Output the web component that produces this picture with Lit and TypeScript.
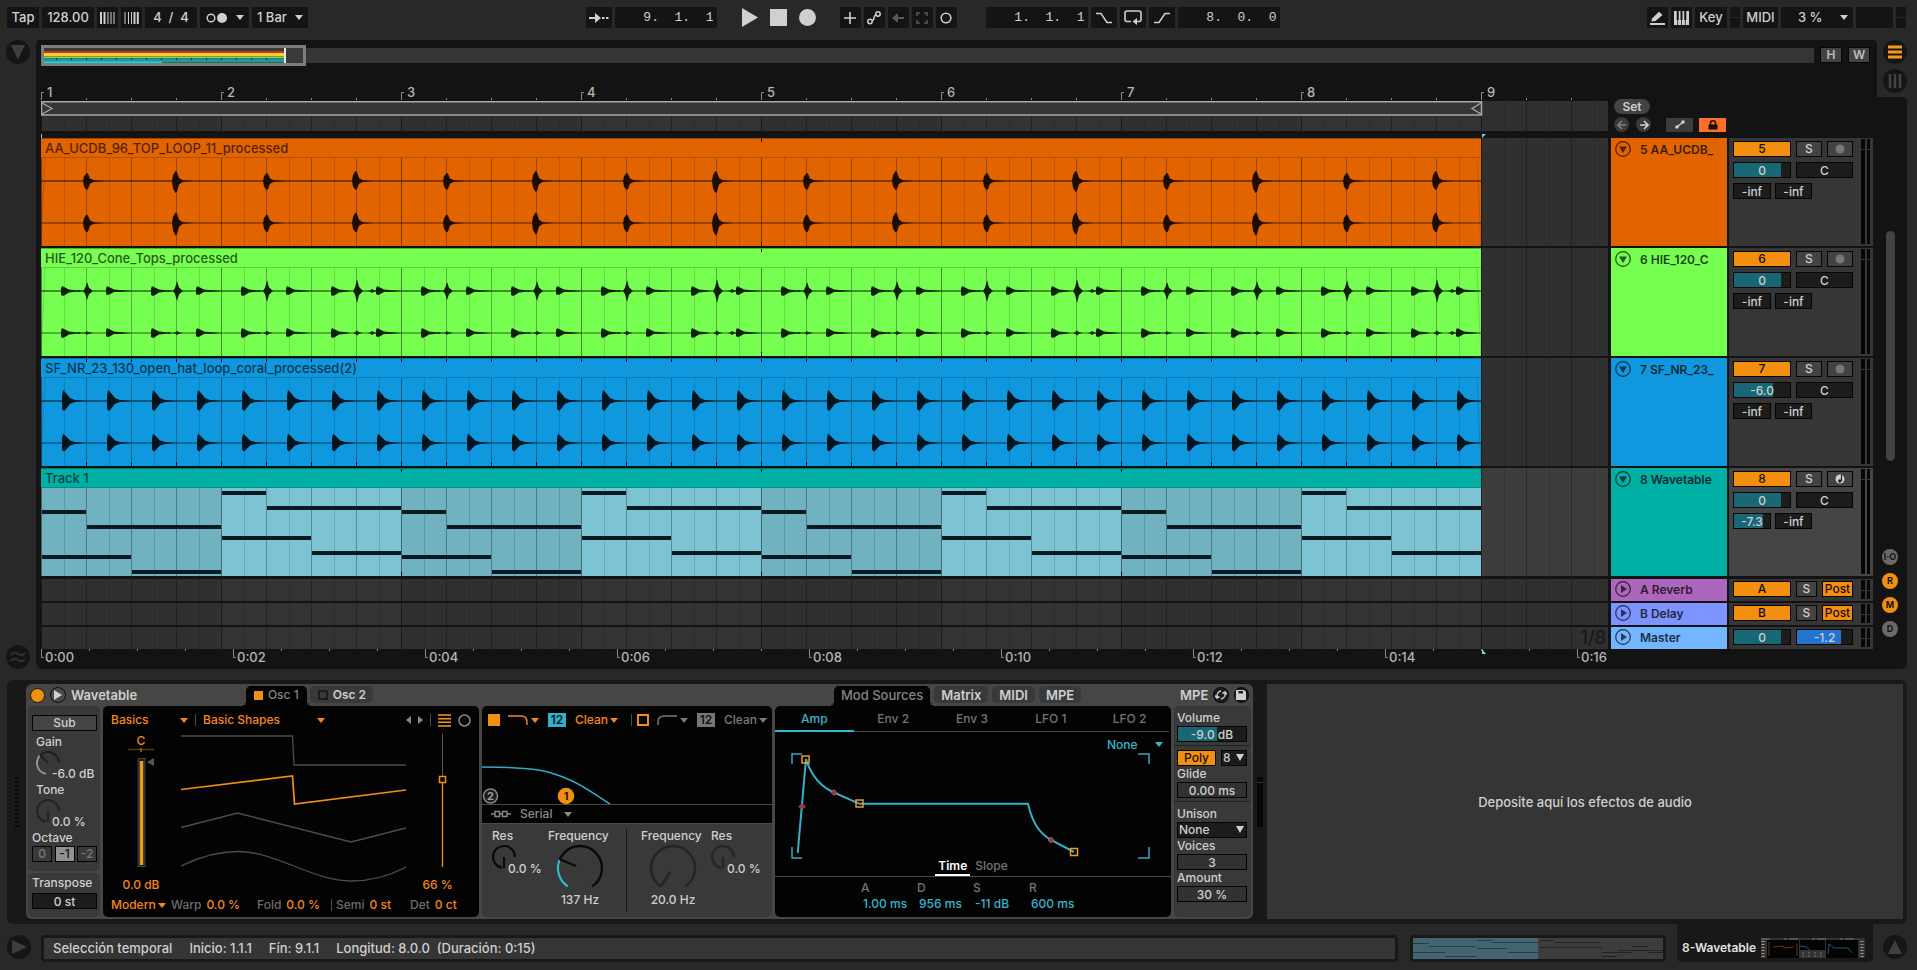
import { LitElement, html, svg, css } from "lit";
import { customElement } from "lit/decorators.js";
import { classMap } from "lit/directives/class-map.js";

const base = css`
  *, *::before, *::after { box-sizing: border-box; }
  :host {
    display: block;
    box-sizing: border-box;
    font-family: Inter, "Noto Sans", sans-serif;
    font-size: 12px;
    line-height: 16px;
    font-weight: 500;
    color: #cfcfcf;
  }
  svg { display: block; flex: none; }
  button, input, select {
    font: inherit;
    color: inherit;
    background: none;
    border: 0;
    border-radius: 0;
    padding: 0;
    margin: 0;
    outline: none;
    appearance: none;
  }
  button { display: flex; align-items: center; justify-content: center; }
  input { min-width: 0; }
  .text { width: 48px; field-sizing: content; }
  .ghost { position: absolute; inset: 0; width: 100%; height: 100%; opacity: 0; }
  .box {
    display: block;
    width: 100%;
    height: 16px;
    border: 1px solid #050505;
    background: #1c1c1c;
    text-align: center;
    line-height: 14px;
  }
  .round { width: 24px; height: 24px; border-radius: 50%; background: #151515; }
`;

const caret = (color = "currentColor") => html`<svg width="8" height="5" viewBox="0 0 8 5"><path d="M0 0H8L4 5Z" fill=${color} /></svg>`;

const bigCaret = () => html`<svg width="10" height="8" viewBox="0 0 10 8"><path d="M1 0H9L5 7Z" fill="currentColor" /></svg>`;

/** Numeric field with a coloured level behind its value. */
const level = (label: string, value: string, pct: number, fill = "#186775") => html`
  <input class="box" aria-label=${label} .value=${value}
    style="background:linear-gradient(90deg, ${fill} ${pct}%, #1c1c1c ${pct}%)" />`;

@customElement("live-transport")
class LiveTransport extends LitElement {
  static styles = [base, css`
    :host { height: 40px; padding: 7px 11px 0 7px; }
    .bar, .group { display: flex; gap: 3px; }
    .bar { gap: 0; font-size: 13px; line-height: 21px; }
    .left { flex: 3; margin-right: 2px; }
    .right { flex: 4; }
    button, .pair, .cell { height: 21px; background: #141414; }
    .cell { text-align: center; }
    .pair { display: flex; align-items: center; justify-content: space-between; }
    .w21 { width: 21px; }
    .w26 { width: 26px; }
    .w32 { width: 32px; }
    .w35 { width: 35px; }
    .w37 { width: 37px; }
    .w52 { width: 52px; }
    .metro { width: 49px; padding: 0 5px 0 6px; }
    .quant { width: 56px; padding: 0 5px 0 5px; }
    .cpu { width: 72px; padding: 0 5px 0 17px; }
    select { flex: 1; min-width: 0; }
    .pos {
      width: 102px;
      padding-right: 3px;
      text-align: right;
      font-family: "Liberation Mono", "DejaVu Sans Mono", monospace;
      font-size: 13px;
      font-weight: 400;
      white-space: pre;
    }
    .play { gap: 12px; margin: 0 24px 0 24px; }
    .play button { background: none; width: 17px; color: #d0d0d0; }
    .edit { margin-right: 29px; }
    .dim { color: #585858; }
    .leds { width: 10px; display: grid; grid-template-rows: 10px 10px; gap: 1px; }
    .leds i { background: #141414; }
  `];

  render() {
    return html`
      <div class="bar">
        <div class="group">
          <button class="w32">Tap</button>
          <input class="cell w52" aria-label="Tempo" .value=${"128.00"} />
          <button class="w21" aria-label="Nudge down"><svg width="15" height="12" stroke="currentColor"><path d="M1 0V12M4.5 0V12" stroke-width="2" /><path d="M8 0V12M11 0V12M14 0V12" /></svg></button>
          <button class="w21" aria-label="Nudge up"><svg width="15" height="12" stroke="currentColor"><path d="M1 0V12M4.500 0V12M7.500 0V12" /><path d="M10.500 0V12M13.800 0V12" stroke-width="2" /></svg></button>
          <input class="cell w52" aria-label="Time signature" .value=${"4  /  4"} />
          <div class="pair metro">
            <button aria-label="Metronome"><svg width="22" height="12"><circle cx="5" cy="6" r="3.800" fill="none" stroke="currentColor" stroke-width="1.400" /><circle cx="16" cy="6" r="5" fill="#d0d0d0" /></svg></button>
            ${caret()}
          </div>
          <label class="pair quant"><select aria-label="Quantization"><option>1 Bar</option></select>${caret()}</label>
        </div>
        <div class="left"></div>
        <div class="group">
          <button class="w26" aria-label="Follow"><svg width="20" height="12"><path d="M0 6H7" stroke="currentColor" stroke-width="2" /><path d="M6 1L12 6L6 11Z" fill="currentColor" /><path d="M13 6H15.500M17 6H19.500" stroke="currentColor" stroke-width="2" /></svg></button>
          <input class="cell pos" aria-label="Position" .value=${"9.  1.  1"} />
        </div>
        <div class="group play">
          <button aria-label="Play"><svg width="17" height="19"><path d="M1 0L17 9.500L1 19Z" fill="currentColor" /></svg></button>
          <button aria-label="Stop"><svg width="17" height="17"><path d="M0 0H17V17H0Z" fill="currentColor" /></svg></button>
          <button aria-label="Record"><svg width="17" height="17"><circle cx="8.500" cy="8.500" r="8.500" fill="currentColor" /></svg></button>
        </div>
        <div class="group edit">
          <button class="w21" aria-label="Overdub"><svg width="12" height="12"><path d="M6 0V12M0 6H12" stroke="currentColor" stroke-width="1.600" /></svg></button>
          <button class="w21" aria-label="Automation arm"><svg width="14" height="14" fill="none" stroke="currentColor" stroke-width="1.500"><circle cx="3" cy="10.500" r="2.200" /><circle cx="11" cy="3" r="2.200" /><path d="M5 9.500C8 10 6 4 9 4" /></svg></button>
          <button class="w21 dim" aria-label="Re-enable automation"><svg width="12" height="10"><path d="M3 5H12" stroke="currentColor" stroke-width="2" /><path d="M6 0L0 5L6 10Z" fill="currentColor" /></svg></button>
          <button class="w21 dim" aria-label="Capture"><svg width="12" height="12" fill="none" stroke="currentColor" stroke-width="1.500"><path d="M1 4V1H4M8 1H11V4M11 8V11H8M4 11H1V8" /></svg></button>
          <button class="w21" aria-label="Session record"><svg width="12" height="12"><circle cx="6" cy="6" r="4.800" fill="none" stroke="currentColor" stroke-width="1.600" /></svg></button>
        </div>
        <div class="group">
          <input class="cell pos" aria-label="Loop start" .value=${"1.  1.  1"} />
          <button class="w26" aria-label="Punch in"><svg width="18" height="12" fill="none" stroke="currentColor" stroke-width="1.500"><path d="M1 1.500H6L12 10.500H17" /></svg></button>
          <button class="w26" aria-label="Loop"><svg width="18" height="15" fill="none" stroke="currentColor" stroke-width="1.600"><path d="M7 11.500H3A2 2 0 0 1 1 9.500V3A2 2 0 0 1 3 1H15A2 2 0 0 1 17 3V9.500A2 2 0 0 1 15 11.500H12" /><path d="M13 8V15L8.500 11.500Z" fill="currentColor" stroke="none" /></svg></button>
          <button class="w26" aria-label="Punch out"><svg width="18" height="12" fill="none" stroke="currentColor" stroke-width="1.500"><path d="M1 10.500H6L12 1.500H17" /></svg></button>
          <input class="cell pos" aria-label="Loop length" .value=${"8.  0.  0"} />
        </div>
        <div class="right"></div>
        <div class="group">
          <button class="w21" aria-label="Draw mode"><svg width="15" height="14"><path d="M0 13H15" stroke="currentColor" stroke-width="2" /><path d="M1.500 10.500L2 7.500L9 0.800L12.500 4L5.500 10Z" fill="currentColor" /></svg></button>
          <button class="w21" aria-label="Computer MIDI keyboard"><svg width="15" height="14"><path d="M0 0H15V14H0Z" fill="currentColor" /><path d="M3.700 0V9M7.500 0V9M11.300 0V9" stroke="#141414" stroke-width="2" /><path d="M3.700 0V14M7.500 0V14M11.300 0V14" stroke="#141414" stroke-width="0.800" /></svg></button>
          <button class="w32">Key</button>
          <div class="leds"><i></i><i></i></div>
          <button class="w35">MIDI</button>
          <label class="pair cpu"><select aria-label="CPU load"><option>3 %</option></select>${caret()}</label>
          <div class="cell w37"></div>
          <div class="leds"><i></i><i></i></div>
        </div>
      </div>`;
  }
}

const BAR = 180;
const BARS = 8;
const END = BAR * BARS;

/** Eighth, quarter and bar lines, over shaded odd bars. */
const gridSvg = (h: number, bars = 10, shade = 0.05) => svg`
  ${Array.from({ length: Math.ceil(bars / 2) }, (_, i) => svg`<rect x=${i * 2 * BAR} width=${BAR} height=${h} fill="#000" opacity=${shade} />`)}
  ${Array.from({ length: bars * 8 }, (_, i) => svg`<path d="M${Math.round(i * 22.5) + 0.5} 0V${h}" stroke="#000" stroke-opacity=${i % 8 === 0 ? 0.45 : i % 2 === 0 ? 0.3 : 0.14} />`)}`;

type Hit = [number, number, number];

const burst = (c: number, k: number) => ([x, up, down]: Hit) =>
  `M${x - 4} ${c}L${x - 3} ${c - up * k * 0.6}L${x - 0.5} ${c - up * k}L${x + 1} ${c - up * k * 0.9}L${x + 3} ${c - up * k * 0.3}L${x + 7} ${c - 0.8}L${x + 18} ${c}L${x + 7} ${c + 0.8}L${x + 3} ${c + down * k * 0.3}L${x + 1} ${c + down * k * 0.9}L${x - 0.5} ${c + down * k}L${x - 3} ${c + down * k * 0.6}Z`;

const decay = (c: number, k: number, len = 22) => ([x, up, down]: Hit) =>
  `M${x - 2} ${c - up * k * 0.5}L${x - 1} ${c - up * k}L${x + 2} ${c - up * k * 0.72}L${x + 6} ${c - up * k * 0.28}L${x + 11} ${c - 1}L${x + len} ${c}L${x + 11} ${c + 1}L${x + 6} ${c + down * k * 0.28}L${x + 2} ${c + down * k * 0.8}L${x} ${c + down * k}L${x - 2} ${c + down * k * 0.8}Z`;

const spike = (c: number, k: number) => ([x, up, down]: Hit) =>
  `M${x - 4} ${c}L${x - 2} ${c - up * k * 0.3}L${x} ${c - up * k}L${x + 2} ${c - up * k * 0.35}L${x + 6} ${c}L${x + 2} ${c + down * k * 0.35}L${x} ${c + down * k}L${x - 2} ${c + down * k * 0.3}Z`;

const TOP = 23;
const LOW = 65;

const topLoop = () => {
  const sizes = [[8, 9], [10, 12], [8, 9], [10, 9], [8, 9], [10, 11]];
  const hits = Array.from({ length: 16 }, (_, i): Hit => [46 + i * 90 - (i % 2), sizes[i % 6][0], sizes[i % 6][1]]);
  return [...hits.map(burst(TOP, 1)), ...hits.map(burst(LOW, 1.050))].join("");
};

const coneTops = () => {
  let d = "";
  for (let i = 0; i < 16; i++) {
    const x = 22 + i * 90;
    const up = 9 + (i % 4);
    for (const c of [TOP, LOW]) {
      d += decay(c, 1, 18)([x, 5, 5]);
      d += decay(c, 1, 24)([x + 45, 5, 4]);
      d += spike(c, c === TOP ? 1 : 0.2)([x + 24, up, up]);
      d += spike(c, 1)(i % 4 === 3 ? [x + 39, 2, 2] : [x + 16, 1, 1]);
    }
  }
  return d;
};

const openHat = () => {
  const hits = Array.from({ length: 32 }, (_, i): Hit => [23 + i * 45, 11, 10]);
  return [...hits.map(decay(TOP, 1)), ...hits.map(decay(LOW, 0.850))].join("");
};

const notes = [[0, 45, 22], [45, 135, 37], [0, 90, 67], [90, 90, 82], [180, 45, 3], [225, 135, 18], [180, 90, 48], [270, 90, 63]];

interface Track {
  n: string; name: string; clip: string; color: string; ink: string; marks: number;
  vol: string; pct: number; peak: string; peakPct: number; wave?: () => string; midi?: boolean;
}

const tracks: Track[] = [
  { n: "5", name: "5 AA_UCDB_", clip: "AA_UCDB_96_TOP_LOOP_11_processed", color: "#e26400", ink: "#1d0d00", marks: 720, vol: "0", pct: 84, peak: "-inf", peakPct: 0, wave: topLoop },
  { n: "6", name: "6 HIE_120_C", clip: "HIE_120_Cone_Tops_processed", color: "#76ff50", ink: "#0f210a", marks: 720, vol: "0", pct: 84, peak: "-inf", peakPct: 0, wave: coneTops },
  { n: "7", name: "7 SF_NR_23_", clip: "SF_NR_23_130_open_hat_loop_coral_processed(2)", color: "#1098de", ink: "#02141d", marks: 45, vol: "-6.0", pct: 70, peak: "-inf", peakPct: 0, wave: openHat },
  { n: "8", name: "8 Wavetable", clip: "Track 1", color: "#00b0a4", ink: "#0a1a20", marks: 360, vol: "0", pct: 84, peak: "-7.3", peakPct: 80, midi: true },
];

@customElement("live-arrangement")
class LiveArrangement extends LitElement {
  static styles = [base, css`
    .area { display: grid; grid-template-columns: 36px minmax(0, 1fr) 40px; }
    .gutter { display: flex; flex-direction: column; justify-content: space-between; align-items: center; }
    .panel { background: #131313; padding: 4px 4px 0 5px; border-radius: 4px 4px 0 6px; }
    .overview { display: flex; align-items: center; height: 22px; padding-right: 3px; }
    .strip { flex: 1; min-width: 0; height: 15px; background: #353535; }
    .strip svg { position: relative; top: -3px; }
    .hw { width: 22px; height: 16px; background: #434343; border: 1px solid #050505; margin-left: 6px; font-weight: 600; color: #bdbdbd; }
    .main { display: grid; grid-template-columns: minmax(0, 1fr) 116px 144px; column-gap: 2px; padding-top: 4px; }
    .lane { position: relative; overflow: hidden; background: #333; min-width: 0; margin-right: 1px; }
    .ruler { height: 31px; background: none; }
    .loop { height: 30px; }
    .gap { grid-column: 1 / -1; height: 7px; }
    .tools { grid-column: 2 / -1; grid-row: 1 / 3; height: 61px; display: flex; flex-direction: column; gap: 3px; padding: 29px 0 0 3px; }
    .set { flex: none; width: 36px; height: 15px; border-radius: 8px; background: #434343; font-weight: 600; }
    .toolrow { display: flex; align-items: center; }
    .mini { width: 15px; height: 15px; border-radius: 50%; background: #3a3a3a; margin-right: 7px; color: #d0d0d0; }
    .off { color: #808080; }
    .tool { width: 27px; height: 14px; background: #3c3c3c; margin-left: 8px; color: #cfcfcf; }
    .tool + .tool { margin-left: 6px; }
    .lock { background: #ff6f2c; color: #1a0a00; }
    .track { height: 108px; margin-bottom: 2px; }
    .name, .mix { background: #363636; }
    .sel { background: #414141; }
    .mix.sel { background: #454545; }
    .last { margin-bottom: 3px; }
    .clip { width: 1440px; position: relative; overflow: hidden; }
    .title { height: 20px; padding: 2px 4px 0; line-height: 17px; border-bottom: 1px solid #00000030; white-space: nowrap; font-size: 13px; }
    .title span { opacity: 0.750; }
    .marks { position: absolute; inset: 0; }
    .name { display: flex; align-items: flex-start; padding: 3px 0 0 4px; gap: 9px; color: #0b0b0b; overflow: hidden; white-space: nowrap; line-height: 17px; }
    .name span { opacity: 0.800; font-weight: 600; }
    .mix { display: flex; justify-content: space-between; padding: 1px 3px 2px 4px; }
    .controls { display: grid; width: 120px; grid-template-columns: 58px 57px; gap: 5px; align-content: start; padding-top: 2px; }
    .two { display: grid; grid-template-columns: 26px 26px; gap: 5px; }
    .send { grid-template-columns: 21px 31px; }
    .peaks { grid-column: 1 / -1; display: grid; grid-template-columns: 38px 37px; gap: 4px; }
    .controls button { height: 16px; border: 1px solid #050505; background: #434343; }
    .controls .on { background: #f28e10; color: #160d00; }
    .meter { width: 9px; display: flex; gap: 2px; }
    .meter i { flex: 1; background: linear-gradient(#050505 10px, #333 10px, #333 11px, #050505 11px); }
    .small { height: 22px; margin-bottom: 2px; }
    .final { margin-bottom: 0; }
    .zoomed { position: absolute; right: 2px; bottom: 0; font-size: 18px; line-height: 22px; color: #181818; }
    .name.small { padding-top: 2px; }
    .small .controls { padding-top: 1px; }
    .time { height: 20px; background: none; }
    .rail { display: flex; flex-direction: column; }
    .modes { height: 57px; display: flex; flex-direction: column; align-items: center; gap: 5px; padding-right: 4px; }
    .scroll { flex: 1; margin-right: 10px; background: #131313; border-radius: 0 5px 6px 0; display: flex; flex-direction: column; align-items: center; padding: 134px 4px 32px 0; }
    .thumb { width: 9px; height: 230px; border-radius: 5px; background: #434343; }
    .show { display: flex; flex-direction: column; gap: 8px; margin-top: auto; }
    .show button { width: 16px; height: 16px; border-radius: 50%; background: #6a6a6a; color: #131313; font-size: 9px; font-weight: 700; }
    .show .on { background: #f28e10; }
  `];

  private fold(open: boolean) {
    return html`<button aria-label="Fold track"><svg width="16" height="16" fill="none"><circle cx="8" cy="8" r="7.300" stroke="#000" stroke-opacity="0.700" stroke-width="1.200" />${open
      ? svg`<path d="M4 5.500H12L8 12Z" fill="#000" fill-opacity="0.650" />`
      : svg`<path d="M6 4V12L12 8Z" fill="#000" fill-opacity="0.650" />`}</svg></button>`;
  }

  private meter() {
    return html`<div class="meter"><i></i><i></i></div>`;
  }

  private track(t: Track, last: boolean) {
    const marks = Array.from({ length: Math.ceil(END / t.marks) - 1 }, (_, i) => Math.round((i + 1) * t.marks) + 0.5);
    const c = { track: true, sel: !!t.midi, last };
    return html`
      <div class=${classMap({ lane: true, ...c })}>
        <svg class="marks" width="1800" height="108">${gridSvg(108)}</svg>
        <div class="clip" style="background:${t.color};color:${t.ink}">
          <div class="title"><span>${t.clip}</span></div>
          <svg width="1440" height="88">
            ${t.midi ? svg`<rect width="1440" height="88" fill="#7cc4d3" />` : ""}
            ${gridSvg(88, 8, t.midi ? 0.090 : 0)}
            ${t.midi
              ? [0, 1, 2, 3].map((r) => notes.map(([x, w, y]) => svg`<rect x=${r * 360 + x + 1} y=${y} width=${w - 1} height="4" fill=${t.ink} />`))
              : svg`<path d="M0 ${TOP}H1441" stroke=${t.ink} stroke-width="1.200" /><path d="M0 ${LOW}H1441" stroke=${t.ink} stroke-opacity="0.700" /><path d=${t.wave!()} fill=${t.ink} />
                <path d="M0 88L4 0M1440 88L1436 0" stroke="#000" stroke-opacity="0.150" />`}
          </svg>
          <svg class="marks" width="1440" height="108">${marks.map((x) => svg`<path d="M${x} 1V4M${x} 104V108" stroke="#000" />`)}<path d="M0 0.500H1440" stroke="#000" stroke-opacity="0.300" /></svg>
        </div>
      </div>
      <div class=${classMap({ name: true, track: true, last })} style="background:${t.color}">${this.fold(true)}<span>${t.name}</span></div>
      <div class=${classMap({ mix: true, ...c })}>
        <div class="controls">
          <button class="on" aria-label="Track ${t.n} active">${t.n}</button>
          <div class="two"><button>S</button><button aria-label="Arm">${t.midi
            ? html`<svg width="10" height="10"><circle cx="5" cy="5" r="4.500" fill="#cfcfcf" /><path d="M6.500 1V7" stroke="#222" stroke-width="1.200" /><circle cx="4.800" cy="7" r="1.700" fill="#222" /></svg>`
            : html`<svg width="10" height="10"><circle cx="5" cy="5" r="4.500" fill="#787878" /></svg>`}</button></div>
          ${level("Volume " + t.n, t.vol, t.pct)}
          <input class="box" aria-label="Pan ${t.n}" .value=${"C"} />
          <div class="peaks">${level("Send A " + t.n, t.peak, t.peakPct)}${level("Send B " + t.n, "-inf", 0)}</div>
        </div>
        ${this.meter()}
      </div>`;
  }

  private small(name: string, color: string, body: unknown, final = false) {
    const c = { small: true, final };
    return html`
      <div class=${classMap({ lane: true, ...c })}><svg width="1800" height="22">${gridSvg(22)}</svg>${final ? html`<span class="zoomed">1/8</span>` : ""}</div>
      <div class=${classMap({ name: true, ...c })} style="background:${color}">${this.fold(false)}<span>${name}</span></div>
      <div class=${classMap({ mix: true, ...c })}><div class="controls">${body}</div>${this.meter()}</div>`;
  }

  render() {
    const send = (n: string) => html`
      <button class="on" aria-label="Return ${n} active">${n}</button>
      <div class="two send"><button>S</button><button class="on">Post</button></div>`;
    return html`
      <div class="area">
        <div class="gutter">
          <button class="round" aria-label="Show browser"><svg width="14" height="16"><path d="M0 1H14L7 16Z" fill="#3e3e3e" /></svg></button>
          <button class="round" aria-label="Groove pool"><svg width="16" height="12" fill="none" stroke="#333" stroke-width="1.800"><path d="M1 4Q4 0 8 3T15 2M1 10Q4 6 8 9T15 8" /></svg></button>
        </div>
        <div class="panel">
          <div class="overview">
            <div class="strip">
              <svg width="265" height="21">
                <rect x="1.500" y="1.500" width="262" height="18" fill="#3a3a3a" stroke="#7d7d7d" stroke-width="3" />
                <path d="M3 7H243" stroke="#c43a1c" stroke-width="2" /><path d="M3 9.500H243" stroke="#ffcb2e" stroke-width="3" />
                <path d="M3 11.500H243" stroke="#c46a10" /><path d="M3 12.500H243" stroke="#6fe36a" stroke-width="1.500" />
                <path d="M3 15.500H243" stroke="#1b9c96" stroke-width="4" /><path d="M3 17.300H121" stroke="#1fd0e8" stroke-width="1.500" />
                <path d="M15 14H240" stroke="#0a3a38" stroke-dasharray="1 14" stroke-width="2" />
                <path d="M244 3V18" stroke="#e8e8e8" stroke-width="2" />
              </svg>
            </div>
            <button class="hw">H</button><button class="hw">W</button>
          </div>
          <div class="main">
            <div class="lane ruler"><svg width="1800" height="31" font-size="13" fill="#b5b5b5">
              ${Array.from({ length: 40 }, (_, i) => i % 4
                ? svg`<path d="M${i * 45 + 0.5} 28V30" stroke="#8a8a8a" />`
                : svg`<path d="M${i * 45 + 0.5} 30V22.500H${i * 45 + 3}" fill="none" stroke="#8a8a8a" />${i <= 32 ? svg`<text x=${i * 45 + 6} y="27">${i / 4 + 1}</text>` : ""}`)}
            </svg></div>
            <div class="tools">
              <button class="set">Set</button>
              <div class="toolrow">
                <button class="mini off" aria-label="Previous locator"><svg width="10" height="10" fill="none" stroke="currentColor" stroke-width="1.600"><path d="M9 5H1M5 1L1 5L5 9" /></svg></button>
                <button class="mini" aria-label="Next locator"><svg width="10" height="10" fill="none" stroke="currentColor" stroke-width="1.600"><path d="M1 5H9M5 1L9 5L5 9" /></svg></button>
                <button class="tool" aria-label="Automation mode"><svg width="10" height="9"><path d="M2 7L8 2" stroke="currentColor" stroke-width="1.400" /><circle cx="2" cy="7" r="1.800" fill="currentColor" /><circle cx="8" cy="2" r="1.800" fill="currentColor" /></svg></button>
                <button class="tool lock" aria-label="Lock envelopes"><svg width="10" height="10"><path d="M0.500 4.500H9.500V9.500H0.500Z" fill="currentColor" /><path d="M2.500 5V3A2.500 2.200 0 0 1 7.500 3V5" fill="none" stroke="currentColor" stroke-width="1.500" /></svg></button>
              </div>
            </div>
            <div class="lane loop"><svg width="1800" height="30">
              ${gridSvg(30)}
              <path d="M0.500 0.800H1440.500V14H0.500Z" fill="#363636" stroke="#a8a8a8" stroke-width="1.500" />
              <path d="M1 2L11 7.500L1 13M1440 2L1431 7.500L1440 13" fill="none" stroke="#a8a8a8" stroke-width="1.300" />
              <path d="M0 15.500H1800" stroke="#262626" stroke-opacity="0.500" />
            </svg></div>
            <div class="gap"><svg width="1450" height="7"><path d="M0.500 3V7" stroke="#7fd0da" /><path d="M1441 3H1445L1441 7Z" fill="#7fd0da" /></svg></div>
            ${tracks.map((t, i) => this.track(t, i === tracks.length - 1))}
            ${this.small("A Reverb", "#ad66bd", send("A"))}
            ${this.small("B Delay", "#7d93ff", send("B"))}
            ${this.small("Master", "#72b6ff", html`${level("Master volume", "0", 84)}${level("Cue volume", "-1.2", 80, "#2474cf")}`, true)}
            <div class="lane time"><svg width="1800" height="20" font-size="13" fill="#b5b5b5">
              ${Array.from({ length: 36 }, (_, i) => i % 4
                ? svg`<path d="M${i * 48 + 0.500} 0V2" stroke="#8a8a8a" />`
                : svg`<path d="M${i * 48 + 0.500} 0V8.500H${i * 48 + 3}" fill="none" stroke="#8a8a8a" /><text x=${i * 48 + 4} y="13">0:${String(i / 2).padStart(2, "0")}</text>`)}
              <path d="M1441 0L1445 5H1441Z" fill="#7fd0da" />
            </svg></div>
          </div>
        </div>
        <div class="rail">
          <div class="modes">
            <button class="round" aria-label="Arrangement view"><svg width="14" height="14" stroke="#f29a1f" stroke-width="3"><path d="M0 2H14M0 7H14M0 12H14" /></svg></button>
            <button class="round" aria-label="Session view"><svg width="14" height="14" stroke="#444" stroke-width="2.500"><path d="M2 0V14M7 0V14M12 0V14" /></svg></button>
          </div>
          <div class="scroll">
            <div class="thumb"></div>
            <div class="show">
              <button aria-label="Show I/O">I·O</button><button class="on">R</button><button class="on">M</button><button>D</button>
            </div>
          </div>
        </div>
      </div>`;
  }
}

@customElement("live-device")
class LiveDevice extends LitElement {
  static styles = [base, css`
    :host { margin: 11px 10px 0 7px; }
    .view { display: flex; background: #181818; border-radius: 6px; padding: 4px 4px 5px 0; height: 244px; }
    .grip { width: 19px; display: grid; place-items: center; }
    .device { flex: none; background: #464646; border-radius: 6px; padding: 0 2px 2px; display: grid; grid-template-columns: 72px 376px 290px 396px 77px; grid-template-rows: 22px 211px; column-gap: 3px; }
    .head { display: flex; align-items: center; font-size: 13px; font-weight: 600; }
    .first { grid-column: 1 / 3; padding-right: 106px; }
    .third { grid-column: 4; padding-left: 59px; align-items: flex-end; gap: 4px; }
    .fourth { gap: 5px; justify-content: flex-end; padding-right: 2px; }
    .power { width: 15px; height: 15px; border-radius: 50%; background: #f28e10; border: 1px solid #151515; margin: 0 5px 0 2px; }
    .circle { width: 16px; height: 16px; border-radius: 50%; background: #4a4a4a; border: 1px solid #0c0c0c; margin-right: 5px; }
    .fourth .circle { margin: 0; background: #1c1c1c; }
    .fourth span { margin-right: auto; padding-left: 6px; }
    .tabs { display: flex; gap: 3px; margin-left: auto; align-self: flex-end; align-items: flex-start; }
    .tab { height: 17px; margin-bottom: 3px; padding: 0 7px; border-radius: 5px; background: #393939; gap: 5px; }
    .tab.now { position: relative; height: 20px; margin: 0; background: #030303; color: #858585; font-weight: 500; border-radius: 5px 5px 0 0; padding-bottom: 2px; }
    .tab.now::before, .tab.now::after { content: ""; position: absolute; bottom: 0; width: 5px; height: 5px; }
    .tab.now::before { left: -5px; background: radial-gradient(circle at 0 0, transparent 5px, #030303 5px); }
    .tab.now::after { right: -5px; background: radial-gradient(circle at 100% 0, transparent 5px, #030303 5px); }
    .tabs .tab { padding: 0 7px 0 8px; font-size: 12px; }
    .tabs .tab.now { padding: 0 8px 2px; }
    .pane { border-radius: 5px; background: #393939; overflow: hidden; }
    .dark { background: #030303; }
    .sub { display: grid; grid-template-rows: 165px 1fr; gap: 2px; }
    .sub .pane { padding: 9px 3px 0 4px; }
    .sub .pane + .pane { padding-top: 2px; }
    .sub .box { width: 65px; }
    .lab { display: block; height: 16px; }
    .in { padding-left: 4px; }
    .sub .lab.top { margin-top: 3px; }
    .sub .box.sb { background: #454545; }
    .sub .box.tr { margin-top: 2px; }
    .oct { display: grid; grid-template-columns: 20px 20px 20px; justify-content: space-between; width: 65px; }
    .oct button { height: 16px; border: 1px solid #050505; color: #7a7a7a; }
    .oct button.on { background: #909090; color: #111; }
    .knob { position: relative; display: grid; width: 64px; height: 32px; margin-left: 4px; }
    .knob svg, .knob .text { grid-area: 1 / 1; }
    .knob svg { margin-top: 1px; }
    .knob .text { align-self: end; justify-self: start; margin-left: 16px; position: relative; }
    .osc { color: #f7861c; display: grid; grid-template-columns: minmax(0, 1fr); grid-template-rows: 28px 159px 24px; }
    .row { display: flex; align-items: center; }
    .pick { display: flex; align-items: center; justify-content: space-between; }
    .sep { width: 1px; height: 12px; background: #4c4c4c; }
    .osc .row { padding: 0 8px; }
    .pk1 { width: 77px; margin-right: 7px; }
    .pk2 { width: 122px; margin-left: 7px; }
    .wt { margin-left: auto; display: flex; align-items: center; gap: 7px; color: #8a8a8a; }
    .body { display: grid; grid-template-columns: 76px 1fr 63px; padding-right: 10px; }
    .col { display: flex; flex-direction: column; align-items: center; }
    .col .text { text-align: center; margin-top: auto; }
    .col .pan { height: 14px; line-height: 14px; margin: 0; }
    .col label { position: relative; }
    .shapes { margin-left: 2px; }
    .params { display: grid; grid-template-columns: 60px 86px 74px 79px 1fr; align-items: center; padding-left: 8px; }
    .params label { display: flex; gap: 5px; align-items: center; }
    .params b { font-weight: 500; color: #6c6c6c; }
    .params .pick { justify-content: flex-start; gap: 2px; }
    .params .semi { border-left: 1px solid #4c4c4c; height: 12px; padding-left: 4px; }
    .filter { display: grid; grid-template-rows: 28px 71px 19px 1fr; }
    .filter .row { background: #030303; }
    .slots { display: grid; grid-template-columns: 149px 1fr; padding-left: 6px; }
    .slot { display: flex; align-items: center; color: #f7861c; height: 28px; }
    .slot + .slot { color: #7a7a7a; }
    .slot i { width: 12px; height: 12px; border: 2px solid #f28e10; margin-right: 8px; }
    .slot .fill { background: #f28e10; }
    .slot button { gap: 3px; margin-right: 9px; }
    .slot .db { width: 18px; height: 14px; background: #31b0cb; color: #06181c; font-weight: 600; }
    .slot + .slot .db { background: #767676; color: #111; }
    .slot label { display: flex; align-items: center; gap: 1px; }
    .slot .sep { margin-left: 13px; }
    .serial { color: #8a8a8a; padding-left: 9px; gap: 9px; border-bottom: 1px solid #4a4a4a; }
    .serial .pick { width: 52px; }
    .knobs { display: grid; grid-template-columns: 56px 78px 1px 70px 1fr; padding: 4px 0 0 10px; }
    .knobs > div { display: flex; flex-direction: column; }
    .knobs .knob { margin: 0; width: 48px; height: 33px; }
    .knobs .rule { background: #191919; height: 84px; }
    .knobs .freq2 { padding-left: 14px; width: 80px; }
    .knobs .res2 { padding-left: 14px; }
    .big { position: relative; display: flex; flex-direction: column; align-items: center; width: 64px; }
    .big .text { text-align: center; }
    .mod { display: grid; grid-template-rows: 26px 21px 106px 18px 1fr; color: #35b5d0; }
    .mtabs { display: grid; grid-template-columns: repeat(5, 1fr); border-bottom: 1px solid #4c4c4c; margin-right: 2px; }
    .mtabs button { color: #757575; height: 26px; padding-bottom: 0; }
    .mtabs button.on { color: #35b5d0; border-bottom: 2px solid #35b5d0; padding-top: 2px; }
    .none { justify-self: end; display: flex; align-items: center; gap: 17px; padding: 4px 8px 0 0; }
    .ts { display: flex; justify-content: center; gap: 2px; border-bottom: 1px solid #4c4c4c; }
    .ts button { padding: 0 3px 3px; color: #757575; }
    .ts button.on { color: #fff; font-weight: 600; border-bottom: 2px solid #fff; padding-bottom: 1px; }
    .adsr { display: grid; grid-template-columns: repeat(4, 56px); padding: 3px 0 0 86px; }
    .adsr label { color: #757575; }
    .adsr .text { display: block; color: #35b5d0; margin-left: 2px; }
    .glob { padding: 4px 4px 0 3px; }
    .glob hr { border: 0; height: 1px; background: #202020; margin: 3px -3px 4px; }
    .glob .plain { background: #323232; }
    .voice { display: grid; grid-template-columns: 39px 26px; justify-content: space-between; }
    .voice button { height: 16px; background: #f28e10; color: #160d00; border: 1px solid #050505; }
    .glob label.box { display: flex; align-items: center; justify-content: space-between; padding: 0 1px; }
    .out { width: 14px; display: grid; place-items: center; }
    .drop { flex: 1; min-width: 0; background: #353535; display: grid; place-items: center; font-size: 13px; }
  `];

  private knob(label: string, value: string, color: string, tip = [0, 11], arc = "") {
    return html`<label class="knob">
      <svg width="24" height="24" fill="none" stroke-width="2.200">
        <path d="M10 22.800A11 11 0 1 1 23 12" stroke=${color} />
        ${arc ? svg`<path d=${arc} stroke="#8f8f8f" />` : ""}
        <path d="M12 12L${12 + tip[0]} ${12 + tip[1]}" stroke=${color} />
      </svg>
      <input class="ghost" type="range" aria-label="${label} knob" />
      <input class="text" aria-label=${label} .value=${value} />
    </label>`;
  }

  private big(label: string, value: string, color: string, pointer: string, arc = "") {
    return html`<div class="big">
      <svg width="50" height="48" fill="none" stroke-width="2.400">
        <path d="M13 42.500A22 22 0 1 1 37 42.500" stroke=${color} />
        ${arc ? svg`<path d=${arc} stroke="#35b5d0" />` : ""}
        <path d=${pointer} stroke=${color} />
      </svg>
      <input class="ghost" type="range" aria-label="${label} knob" />
      <input class="text" aria-label=${label} .value=${value} />
    </div>`;
  }

  private filterSlot(on: boolean, curve: string) {
    return html`<div class="slot">
      <i class=${on ? "fill" : ""}></i>
      <button aria-label="Filter type"><svg width="20" height="12" fill="none" stroke="currentColor" stroke-width="1.500"><path d=${curve} /></svg>${caret()}</button>
      <button class="db">12</button>
      <label><select aria-label="Filter circuit"><option>Clean</option></select>${caret()}</label>
      ${on ? html`<span class="sep"></span>` : ""}
    </div>`;
  }

  private param(label: string, value: string, cls = "") {
    return html`<label class=${cls}><b>${label}</b><input class="text" .value=${value} /></label>`;
  }

  render() {
    const sq = (x: number, y: number) => svg`<rect x=${x - 3.5} y=${y - 3.5} width="7" height="7" stroke="#f29a1f" stroke-width="1.500" />`;
    const dia = (x: number, y: number) => svg`<path d="M${x - 3} ${y}L${x} ${y - 3}L${x + 3} ${y}L${x} ${y + 3}Z" fill="#7a4048" stroke="#c0525c" />`;
    return html`
      <div class="view">
        <div class="grip"><svg width="4" height="50"><path d="M1 0V50M3.500 0V50" stroke="#000" stroke-dasharray="2 2" stroke-width="1.500" /></svg></div>
        <div class="device">
          <div class="head first">
            <button class="power" aria-label="Device on"></button>
            <button class="circle" aria-label="Fold device"><svg width="8" height="10"><path d="M0 0L8 5L0 10Z" fill="#cfcfcf" /></svg></button>
            <span>Wavetable</span>
            <div class="tabs">
              <button class="tab now"><svg width="9" height="9"><path d="M0 0H9V9H0Z" fill="#f28e10" /></svg>Osc 1</button>
              <button class="tab"><svg width="10" height="10"><path d="M1 1H9V9H1Z" fill="none" stroke="#151515" stroke-width="1.500" /></svg>Osc 2</button>
            </div>
          </div>
          <div class="head third">
            <button class="tab now">Mod Sources</button><button class="tab">Matrix</button><button class="tab">MIDI</button><button class="tab">MPE</button>
          </div>
          <div class="head fourth">
            <span>MPE</span>
            <button class="circle" aria-label="Hot-swap"><svg width="12" height="10" fill="none" stroke="#cfcfcf" stroke-width="1.500"><path d="M2 7.500C1.500 4 3.500 1.500 6 1M10 2.500C10.500 6 8.500 8.500 6 9M0 5.500L2 8L4.500 6.500M7.500 3.500L10 2L12 4.500" /></svg></button>
            <button class="circle" aria-label="Save preset"><svg width="10" height="10"><path d="M0 0H8L10 2V10H0Z" fill="#cfcfcf" /><path d="M2.500 1H7V3.500H2.500Z" fill="#1c1c1c" /></svg></button>
          </div>

          <div class="sub">
            <div class="pane">
              <button class="box sb">Sub</button>
              <span class="lab top in">Gain</span>
              ${this.knob("Gain", "-6.0 dB", "#1f1f1f", [-8, -8], "M10 22.800A11 11 0 0 1 4.200 4.200")}
              <span class="lab in">Tone</span>
              ${this.knob("Tone", "0.0 %", "#242424")}
              <span class="lab">Octave</span>
              <div class="oct"><button>0</button><button class="on">-1</button><button>-2</button></div>
            </div>
            <div class="pane">
              <label><span class="lab">Transpose</span><input class="box tr" .value=${"0 st"} /></label>
            </div>
          </div>

          <div class="pane dark osc">
            <div class="row">
              <label class="pick pk1"><select aria-label="Category"><option>Basics</option></select>${caret()}</label>
              <span class="sep"></span>
              <label class="pick pk2"><select aria-label="Wavetable"><option>Basic Shapes</option></select>${caret()}</label>
              <div class="wt">
                <button aria-label="Previous"><svg width="5" height="8"><path d="M5 0V8L0 4Z" fill="currentColor" /></svg></button>
                <button aria-label="Next"><svg width="5" height="8"><path d="M0 0V8L5 4Z" fill="currentColor" /></svg></button>
                <span class="sep"></span>
                <button aria-label="Stacked view"><svg width="13" height="13" stroke="#f29a1f" stroke-width="1.500"><path d="M0 1H13M0 4.700H13M0 8.300H13M0 12H13" /></svg></button>
                <button aria-label="Polar view"><svg width="13" height="13"><circle cx="6.500" cy="6.500" r="5.500" fill="none" stroke="currentColor" stroke-width="1.500" /></svg></button>
              </div>
            </div>
            <div class="body">
              <div class="col">
                <input class="text pan" aria-label="Pan" .value=${"C"} />
                <label><svg width="76" height="120"><path d="M25 1.500H51" stroke="#5a3510" stroke-width="1.500" /><path d="M38 0V4" stroke="#f28e10" /><rect x="35" y="10.500" width="7" height="108" fill="#1c1c1c" stroke="#444" /><path d="M38.500 13V117" stroke="#f29a1f" stroke-width="3.500" /><path d="M44 14L51 10V18Z" fill="#555" /></svg>
                <input class="ghost" type="range" aria-label="Oscillator gain slider" /></label>
                <input class="text" aria-label="Oscillator gain" .value=${"0.0 dB"} />
              </div>
              <svg class="shapes" width="225" height="155" fill="none" stroke="#4d4d4d" stroke-width="1.300">
                <path d="M0 2H111.500L113 31H225" />
                <path d="M0 55.500L111.500 42L113.500 70L225 56" stroke="#f28e10" stroke-width="1.700" />
                <path d="M0 93.500L56.500 79L170 108L225 94" />
                <path d="M0 132C20 122 38 117.500 57 117.500C95 117.500 132 147 170 147C190 147 208 142 225 133" />
              </svg>
              <div class="col">
                <label><svg width="63" height="135"><path d="M36.500 0V42" stroke="#5a5a5a" /><path d="M36.500 49V133" stroke="#f28e10" stroke-width="1.300" /><rect x="33.500" y="42.500" width="6" height="6" fill="none" stroke="#f28e10" stroke-width="1.500" /></svg>
                <input class="ghost" type="range" aria-label="Wavetable position slider" /></label>
                <input class="text" aria-label="Wavetable position" .value=${"66 %"} />
              </div>
            </div>
            <div class="params">
              <label class="pick"><select aria-label="Effect mode"><option>Modern</option></select>${caret()}</label>
              ${this.param("Warp", "0.0 %")}${this.param("Fold", "0.0 %")}${this.param("Semi", "0 st", "semi")}${this.param("Det", "0 ct")}
            </div>
          </div>

          <div class="pane filter">
            <div class="row slots">
              ${this.filterSlot(true, "M0 2H13Q19 2 19 8V11")}${this.filterSlot(false, "M1 11V8Q1 2 7 2H20")}
            </div>
            <div class="dark">
              <svg width="290" height="71" font-size="11" font-weight="700" text-anchor="middle">
                <path d="M0 33C50 33 66 36 88 46C106 54 116 63 128 70" fill="none" stroke="#35a9c4" stroke-width="1.500" />
                <path d="M0 70.500H290" stroke="#4a4a4a" />
                <circle cx="8.500" cy="62" r="7" fill="#1c1c1c" stroke="#8a8a8a" stroke-width="1.500" /><text x="8.500" y="66" fill="#a0a0a0">2</text>
                <circle cx="84" cy="62" r="8.300" fill="#f28e10" /><text x="84" y="66" fill="#2a1800">1</text>
              </svg>
            </div>
            <div class="row serial">
              <svg width="20" height="8" fill="none" stroke="currentColor" stroke-width="1.400"><path d="M0 4H4M8.500 4H11.500M16 4H20M4 1.500H8.500V6.500H4ZM11.500 1.500H16V6.500H11.500Z" /></svg>
              <label class="pick"><select aria-label="Routing"><option>Serial</option></select>${caret()}</label>
            </div>
            <div class="knobs">
              <div><span class="lab">Res</span>${this.knob("Filter 1 Res", "0.0 %", "#0a0a0a")}</div>
              <div><span class="lab">Frequency</span>${this.big("Filter 1 Frequency", "137 Hz", "#0a0a0a", "M5 15.500L21 22", "M13 42.500A22 22 0 0 1 4.500 16")}</div>
              <div class="rule"></div>
              <div class="freq2"><span class="lab">Frequency</span>${this.big("Filter 2 Frequency", "20.0 Hz", "#242424", "M13 42.500L22 28")}</div>
              <div class="res2"><span class="lab">Res</span>${this.knob("Filter 2 Res", "0.0 %", "#242424")}</div>
            </div>
          </div>

          <div class="pane dark mod">
            <div class="mtabs"><button class="on">Amp</button><button>Env 2</button><button>Env 3</button><button>LFO 1</button><button>LFO 2</button></div>
            <label class="none"><select aria-label="Loop mode"><option>None</option></select>${caret()}</label>
            <svg width="396" height="106" fill="none">
              <path d="M27 1H17V11M17 94V105H27M363 1H374V11M363 105H374V94" stroke="#35a9c4" stroke-width="1.500" />
              <path d="M22.700 100L31 6C36 22 44 33 59 39.500L84.500 50.800H253C258 72 265 80 276 87L299 99" stroke="#35b0cc" stroke-width="2" />
              ${sq(30.5, 6.5)}${sq(84.5, 50.5)}${sq(299, 99)}${dia(27, 53.5)}${dia(59, 39.5)}${dia(276, 87)}
            </svg>
            <div class="ts"><button class="on">Time</button><button>Slope</button></div>
            <div class="adsr">
              ${[["A", "1.00 ms"], ["D", "956 ms"], ["S", "-11 dB"], ["R", "600 ms"]].map(([k, v]) => html`<label>${k}<input class="text" .value=${v} /></label>`)}
            </div>
          </div>

          <div class="pane glob">
            <span class="lab">Volume</span>${level("Volume", "-9.0 dB", 58)}
            <hr />
            <div class="voice"><button>Poly</button><label class="box"><select aria-label="Polyphony"><option>8</option></select>${bigCaret()}</label></div>
            <label><span class="lab">Glide</span><input class="box plain" .value=${"0.00 ms"} /></label>
            <hr />
            <span class="lab">Unison</span><label class="box"><select aria-label="Unison"><option>None</option></select>${bigCaret()}</label>
            <label><span class="lab">Voices</span><input class="box plain" .value=${"3"} /></label>
            <label><span class="lab">Amount</span><input class="box plain" .value=${"30 %"} /></label>
          </div>
        </div>
        <div class="out"><svg width="6" height="50"><path d="M1.500 0V50M4.500 0V50" stroke="#000" stroke-width="2" /><path d="M0 5.500H6" stroke="#333" /></svg></div>
        <div class="drop">Deposite aquí los efectos de audio</div>
      </div>`;
  }
}

@customElement("live-status")
class LiveStatus extends LitElement {
  static styles = [base, css`
    .bar { display: flex; height: 46px; padding: 0 10px 8px 7px; align-items: flex-end; }
    .round { margin: 0 10px 3px 0; }
    .last { margin: 0 0 3px 10px; }
    .info { flex: 1; min-width: 0; display: flex; gap: 17px; height: 27px; background: #353535; border: 3px solid #181818; border-radius: 4px; padding-left: 9px; line-height: 21px; font-size: 13px; white-space: pre; }
    .clip { margin: 0 11px 0 12px; background: #181818; padding: 3px; border-radius: 4px; }
    .tab { display: flex; align-items: center; gap: 5px; height: 38px; background: #181818; padding: 10px 8px 0 5px; border-radius: 0 0 5px 5px; font-weight: 600; color: #e2e2e2; }
  `];

  render() {
    const lines = [[0, 16, 5], [16, 46, 8], [64, 15, 2], [79, 46, 4], [64, 30, 10], [0, 32, 14], [95, 30, 14], [32, 31, 18]];
    const rest = [[127, 14, 2], [142, 45, 4], [127, 62, 9], [219, 16, 8], [205, 45, 12], [189, 30, 14], [235, 15, 14], [189, 15, 18]];
    return html`
      <div class="bar">
        <button class="round" aria-label="Show info view"><svg width="16" height="14"><path d="M1 0L16 7L1 14Z" fill="#3e3e3e" /></svg></button>
        <div class="info"><span>Selección temporal</span><span>Inicio: 1.1.1</span><span>Fín: 9.1.1</span><span>Longitud: 8.0.0  (Duración: 0:15)</span></div>
        <div class="clip"><svg width="250" height="21">
          <rect width="250" height="21" fill="#3d3d3d" /><rect width="125" height="21" fill="#44646f" />
          ${lines.map(([x, w, y]) => svg`<path d="M${x} ${y + 0.5}H${x + w}" stroke="#1f3f50" />`)}
          ${rest.map(([x, w, y]) => svg`<path d="M${x} ${y + 0.5}H${x + w}" stroke="#222" />`)}
        </svg></div>
        <div class="tab">
          <span>8-Wavetable</span>
          <svg width="104" height="20"><rect width="104" height="20" fill="#333" /><path d="M6 2H38V20H6ZM39 2H64V12H39ZM65 2H97V20H65Z" fill="#030303" />
            <path d="M0 1H104" stroke="#777" stroke-dasharray="9 14 3 2" /><path d="M2 3V19M101 3V19" stroke="#999" stroke-width="3" stroke-dasharray="1 2" />
            <path d="M8 4V18M36 6V18M12 9L22 8L23 10L33 9" fill="none" stroke="#7a4a10" stroke-width="0.800" /><path d="M39 8Q46 8 49 12M67 16L68 6L73 10H87L91 15" fill="none" stroke="#1e7a8c" stroke-width="0.800" />
            <path d="M41 15H62M41 18H62" stroke="#777" stroke-dasharray="2 4" /></svg>
        </div>
        <button class="round last" aria-label="Show device view"><svg width="14" height="14"><path d="M7 0L14 14H0Z" fill="#3e3e3e" /></svg></button>
      </div>`;
  }
}

@customElement("app-root")
class AppRoot extends LitElement {
  static styles = css`
    :host { display: block; min-height: 100vh; background: #282828; overflow: hidden; }
  `;

  render() {
    return html`<live-transport></live-transport><live-arrangement></live-arrangement><live-device></live-device><live-status></live-status>`;
  }
}
